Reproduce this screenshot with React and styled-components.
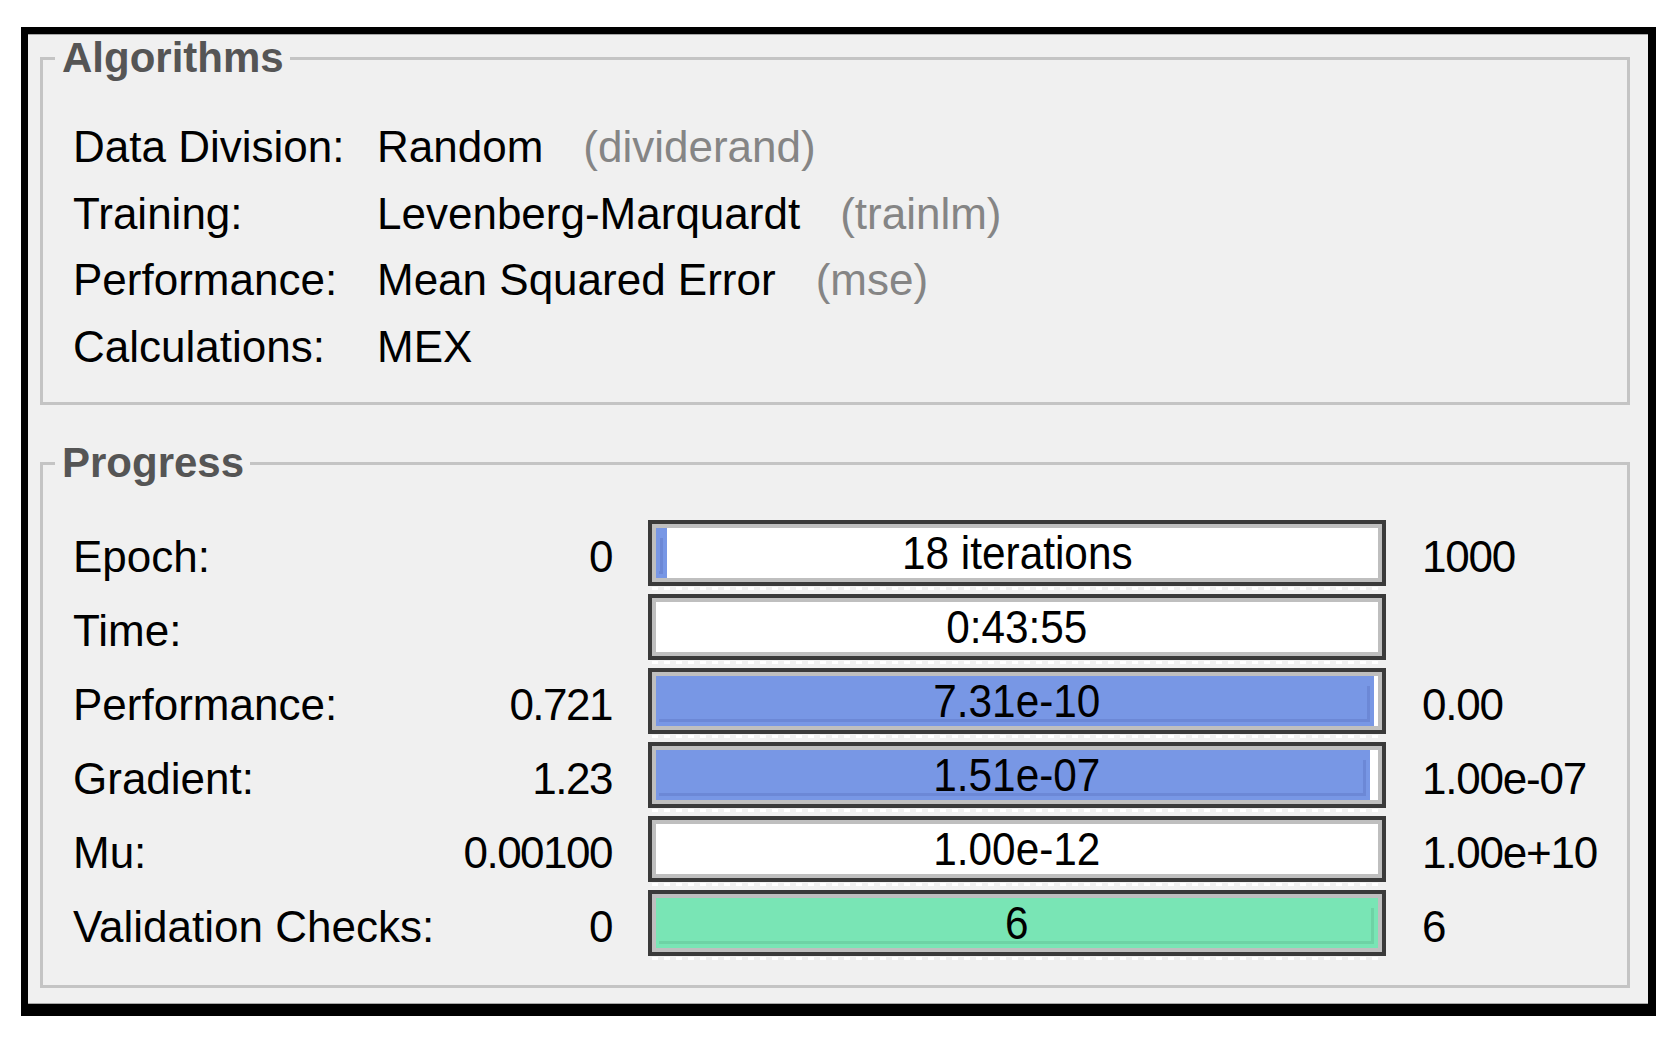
import React from 'react';
import styled, { createGlobalStyle } from 'styled-components';

const GlobalStyle = createGlobalStyle`
  html, body { margin: 0; padding: 0; background: #ffffff; }
  body { font-family: "Liberation Sans", Arial, sans-serif; color: #000; }
  * { box-sizing: border-box; }
`;

const Frame = styled.div`
  margin: 27px 0 0 21px;
  width: 1635px;
  height: 989px;
  border-style: solid;
  border-color: #000;
  border-width: 7px 8px 12px 7px;
  background: #f0f0f0;
`;

const Inner = styled.div`
  height: 100%;
  border-top: 1px solid #a8a8a8;
  border-bottom: 1px solid #a8a8a8;
  padding: 2px 18px 0 12px;
  display: flex;
  flex-direction: column;
  gap: 37px;
`;

const Group = styled.fieldset`
  margin: 0;
  min-width: 0;
  border: 3px solid #c4c4c4;
  padding: ${(p) => p.$pad};
`;

const Legend = styled.legend`
  margin-left: -18px;
  padding: 0 6px 0 7px;
  font-size: 42px;
  line-height: 42px;
  font-weight: bold;
  color: #555555;
`;

const AlgoRow = styled.div`
  display: grid;
  grid-template-columns: 304px auto auto 1fr;
  height: 66.5px;
  line-height: 66.5px;
  font-size: 44px;
  white-space: nowrap;
`;

const Note = styled.span`
  margin-left: 40px;
  color: #858585;
`;

const ProgRow = styled.div`
  display: grid;
  grid-template-columns: 539px 738px 1fr;
  column-gap: 36px;
  height: 74px;
  font-size: 44px;
  white-space: nowrap;
`;

const LeftCell = styled.div`
  display: flex;
  justify-content: space-between;
  padding-top: 8px;
  line-height: 66px;
`;

const Num = styled.span`
  letter-spacing: -1.5px;
`;

const RightCell = styled.div`
  padding: 8px 0 0 0;
  line-height: 66px;
  letter-spacing: -1.2px;
`;

const Bar = styled.div`
  position: relative;
  height: 66px;
  margin-top: 4px;
  border: 4px solid #3a3a3a;
  box-shadow: inset 0 0 0 4px #bfbfbf;
  background: #ffffff;
  padding: 4px;

  &::after {
    content: '';
    position: absolute;
    left: 0;
    right: 0;
    bottom: -8px;
    height: 3px;
    background: repeating-linear-gradient(90deg, #ffffff 0 6px, transparent 6px 12px);
  }
`;

const Track = styled.div`
  display: grid;
  height: 100%;
`;

const Fill = styled.div`
  grid-area: 1 / 1;
  justify-self: start;
  position: relative;
  height: 100%;
  background: ${(p) => p.$color};

  &::after {
    content: '';
    position: absolute;
    top: 10px;
    left: 3px;
    right: 4px;
    bottom: 4px;
    border-right: 3px solid ${(p) => p.$shade};
    border-bottom: 3px solid ${(p) => p.$shade};
  }
`;

const BarText = styled.span`
  grid-area: 1 / 1;
  place-self: center;
  font-size: 46px;
  line-height: 1;
  transform: scaleX(0.92);
  position: relative;
`;

const BLUE = '#7897e5';
const BLUE_SHADE = '#6c88d6';
const GREEN = '#79e5b5';
const GREEN_SHADE = '#6ed3a5';

const algorithms = [
  { label: 'Data Division:', value: 'Random', note: '(dividerand)' },
  { label: 'Training:', value: 'Levenberg-Marquardt', note: '(trainlm)' },
  { label: 'Performance:', value: 'Mean Squared Error', note: '(mse)' },
  { label: 'Calculations:', value: 'MEX', note: '' },
];

const progress = [
  { label: 'Epoch:', from: '0', text: '18 iterations', to: '1000', fill: 1.5, color: BLUE, shade: BLUE_SHADE },
  { label: 'Time:', from: '', text: '0:43:55', to: '', fill: 0 },
  { label: 'Performance:', from: '0.721', text: '7.31e-10', to: '0.00', fill: 99.4, color: BLUE, shade: BLUE_SHADE },
  { label: 'Gradient:', from: '1.23', text: '1.51e-07', to: '1.00e-07', fill: 98.9, color: BLUE, shade: BLUE_SHADE },
  { label: 'Mu:', from: '0.00100', text: '1.00e-12', to: '1.00e+10', fill: 0 },
  { label: 'Validation Checks:', from: '0', text: '6', to: '6', fill: 100, color: GREEN, shade: GREEN_SHADE },
];

export default function App() {
  return (
    <>
      <GlobalStyle />
      <Frame>
        <Inner>
          <Group $pad="35px 0 22px 30px">
            <Legend>Algorithms</Legend>
            {algorithms.map((r) => (
              <AlgoRow key={r.label}>
                <span>{r.label}</span>
                <span>{r.value}</span>
                {r.note ? <Note>{r.note}</Note> : <span />}
              </AlgoRow>
            ))}
          </Group>
          <Group $pad="32px 0 25px 30px">
            <Legend>Progress</Legend>
            {progress.map((r) => (
              <ProgRow key={r.label}>
                <LeftCell>
                  <span>{r.label}</span>
                  <Num>{r.from}</Num>
                </LeftCell>
                <Bar>
                  <Track>
                    {r.fill > 0 && (
                      <Fill $color={r.color} $shade={r.shade} style={{ width: `${r.fill}%` }} />
                    )}
                    <BarText>{r.text}</BarText>
                  </Track>
                </Bar>
                <RightCell>{r.to}</RightCell>
              </ProgRow>
            ))}
          </Group>
        </Inner>
      </Frame>
    </>
  );
}
